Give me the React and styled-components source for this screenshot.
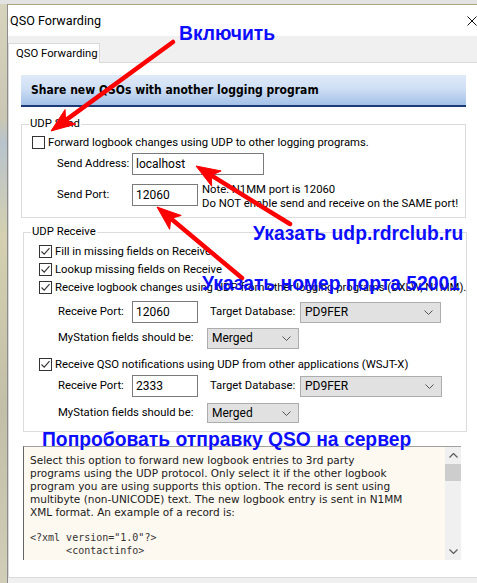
import React from 'react'
import styled, { createGlobalStyle } from 'styled-components'

const GlobalStyle = createGlobalStyle`
  html, body {
    margin: 0;
    padding: 0;
  }
  body {
    width: 477px;
    height: 583px;
    overflow: hidden;
    background: #e2e2e2;
    font-family: Roboto, "Liberation Sans", Arial, sans-serif;
    color: #000;
  }
`

const Page = styled.div`
  position: relative;
  display: flex;
  height: 583px;
  padding-top: 4px;
  box-sizing: border-box;
`

const Desktop = styled.div`
  width: 7px;
  flex: none;
  background: linear-gradient(180deg, #d6d3bd 0%, #c9c7b4 20%, #b8c3cc 24%, #d4d0b0 40%, #c2bfa8 70%, #d0cdb8 100%);
`

const Window = styled.div`
  flex: 1;
  display: flex;
  flex-direction: column;
  border-left: 1px solid #8c8c8c;
  border-top: 1px solid #a9a67e;
  background: #f0f0f0;
`

const TitleBar = styled.div`
  height: 31px;
  flex: none;
  display: flex;
  align-items: center;
  justify-content: space-between;
  padding: 0 4px 0 2px;
  background: #fff;
  font-size: 12.6px;
`

const CloseIcon = () => (
  <svg width="10" height="10" viewBox="0 0 10 10">
    <path d="M0.5 0.5 L9.5 9.5 M9.5 0.5 L0.5 9.5" stroke="#111" strokeWidth="1" />
  </svg>
)

const Body = styled.div`
  flex: 1;
  display: flex;
  flex-direction: column;
  padding: 7px 3px 5px 0;
  min-height: 0;
`

const Tab = styled.div`
  align-self: flex-start;
  position: relative;
  z-index: 1;
  width: 92px;
  height: 20px;
  box-sizing: border-box;
  margin-bottom: -1px;
  padding-left: 7px;
  border: 1px solid #d9d9d9;
  border-bottom: none;
  background: #fff;
  font-size: 11.3px;
  line-height: 19px;
`

const Panel = styled.div`
  flex: 1;
  display: flex;
  flex-direction: column;
  padding: 12px 11px 0 12px;
  border: 1px solid #d9d9d9;
  background: #fff;
`

const Header = styled.div`
  height: 32px;
  box-sizing: border-box;
  display: flex;
  align-items: center;
  padding-left: 10px;
  border-bottom: 2px solid #1d3a76;
  background: linear-gradient(180deg, #dfeaf8 0%, #cfdff4 45%, #a3c1e8 100%);
  font-family: "DejaVu Sans Condensed", "DejaVu Sans", sans-serif;
  font-weight: bold;
  font-size: 12px;
`

const Group = styled.fieldset`
  margin: 0;
  padding: 0;
  min-width: 0;
  border: 1px solid #dcdcdc;
  font-size: 11.3px;
`

const SendGroup = styled(Group)`
  margin-top: 10px;
`

const ReceiveGroup = styled(Group)`
  margin: 7px -1px 0 2px;
`

const Legend = styled.legend`
  margin-left: 7px;
  padding: 0 1px;
  line-height: 14px;
`

const GroupBody = styled.div`
  display: flex;
  flex-direction: column;
  padding: ${p => p.$pad};
`

const CheckRow = styled.div`
  display: flex;
  align-items: center;
  gap: 3px;
  height: ${p => p.$h || 18}px;
  margin-top: ${p => p.$mt || 0}px;
  white-space: nowrap;
`

const Box = styled.span`
  width: 13px;
  height: 13px;
  box-sizing: border-box;
  flex: none;
  display: flex;
  align-items: center;
  justify-content: center;
  border: 1px solid #333;
  background: #fff;
`

const Checkbox = ({ checked }) => (
  <Box>
    {checked && (
      <svg width="11" height="11" viewBox="0 0 11 11">
        <path d="M1.5 5.5 L4.2 8.2 L9.5 2.2" fill="none" stroke="#333" strokeWidth="1.1" />
      </svg>
    )}
  </Box>
)

const FieldRow = styled.div`
  display: flex;
  align-items: ${p => p.$align || 'center'};
  margin-top: ${p => p.$mt || 0}px;
  padding-left: ${p => p.$indent}px;
`

const Label = styled.span`
  flex: none;
  width: ${p => p.$w}px;
  margin-left: ${p => p.$ml || 0}px;
  line-height: 22px;
  white-space: nowrap;
`

const TextBox = styled.div`
  flex: none;
  width: ${p => p.$w}px;
  height: 22px;
  box-sizing: border-box;
  display: flex;
  align-items: center;
  padding-left: 3px;
  border: 1px solid #7a7a7a;
  background: #fff;
  font-size: 12px;
`

const Note = styled.div`
  margin: -1px 0 0 4px;
  line-height: 14px;
  white-space: nowrap;
`

const SelectBox = styled.div`
  flex: none;
  width: ${p => p.$w}px;
  height: ${p => p.$h || 21}px;
  box-sizing: border-box;
  display: flex;
  align-items: center;
  justify-content: space-between;
  padding: 0 7px 0 4px;
  border: 1px solid #adadad;
  background: #e1e1e1;
  font-size: 12px;
`

const Chevron = () => (
  <svg width="9" height="5" viewBox="0 0 9 5">
    <path d="M0.5 0.5 L4.5 4.5 L8.5 0.5" fill="none" stroke="#555" strokeWidth="1" />
  </svg>
)

const Select = ({ value, w, h }) => (
  <SelectBox $w={w} $h={h}>
    <span>{value}</span>
    <Chevron />
  </SelectBox>
)

const Description = styled.div`
  display: flex;
  width: 438px;
  height: 114px;
  box-sizing: border-box;
  margin: 14px 0 0 2px;
  border-top: 1px solid #a0a0a0;
  border-left: 1px solid #646464;
  background: #fdf8f0;
`

const DescText = styled.div`
  flex: 1;
  overflow: hidden;
  padding: 7px 0 0 6px;
  font-family: "DejaVu Sans", Verdana, sans-serif;
  font-size: 10.5px;
  line-height: 13px;
  color: #1a1a1a;
`

const Line = styled.div`
  white-space: pre;
  height: 13px;
`

const Code = styled.div`
  white-space: pre;
  font-family: "DejaVu Sans Mono", "Liberation Mono", monospace;
  font-size: 10px;
  line-height: 12.5px;
  color: #333;
`

const ScrollBar = styled.div`
  width: 16px;
  flex: none;
  display: flex;
  flex-direction: column;
  align-items: center;
  background: #f0f0f0;
`

const ScrollBtn = styled.div`
  height: 17px;
  display: flex;
  align-items: center;
  justify-content: center;
`

const Thumb = styled.div`
  width: 16px;
  height: 17px;
  background: #cdcdcd;
`

const Track = styled.div`
  flex: 1;
`

const Arrowhead = ({ up }) => (
  <svg width="9" height="5" viewBox="0 0 9 5">
    <path d={up ? 'M0.5 4.5 L4.5 0.5 L8.5 4.5' : 'M0.5 0.5 L4.5 4.5 L8.5 0.5'} fill="none" stroke="#606060" strokeWidth="1.3" />
  </svg>
)

const Annotation = styled.div`
  position: absolute;
  left: ${p => p.$x}px;
  top: ${p => p.$y}px;
  font-family: "Liberation Sans", Arial, sans-serif;
  font-weight: bold;
  font-size: 19.3px;
  line-height: 20px;
  color: #0d0dff;
  white-space: nowrap;
`

const Overlay = styled.svg`
  position: absolute;
  left: 0;
  top: 0;
  pointer-events: none;
`

const Arrow = ({ from, to }) => {
  const [x1, y1] = from
  const [x2, y2] = to
  const dx = x2 - x1
  const dy = y2 - y1
  const len = Math.hypot(dx, dy)
  const ux = dx / len
  const uy = dy / len
  const head = 24
  const half = 9
  const bx = x2 - ux * head
  const by = y2 - uy * head
  const nx = x2 - ux * (head - 6)
  const ny = y2 - uy * (head - 6)
  const px = -uy * half
  const py = ux * half
  return (
    <g fill="#ff0000" stroke="#ff0000">
      <line x1={x1} y1={y1} x2={nx} y2={ny} strokeWidth="4.5" strokeLinecap="round" />
      <polygon points={`${x2},${y2} ${bx + px},${by + py} ${nx},${ny} ${bx - px},${by - py}`} strokeWidth="1" />
    </g>
  )
}

const description = [
  'Select this option to forward new logbook entries to 3rd party',
  'programs using the UDP protocol. Only select it if the other logbook',
  'program you are using supports this option. The record is sent using',
  'multibyte (non-UNICODE) text. The new logbook entry is sent in N1MM',
  'XML format. An example of a record is:',
  '',
]

const ReceiveFields = ({ port, first }) => (
  <>
    <FieldRow $indent={19} $mt={first ? 5 : 2}>
      <Label $w={74}>Receive Port:</Label>
      <TextBox $w={66}>{port}</TextBox>
      <Label $w={90} $ml={12}>Target Database:</Label>
      <Select value="PD9FER" w={first ? 141 : 142} />
    </FieldRow>
    <FieldRow $indent={19} $mt={first ? 4 : 5}>
      <Label $w={149}>MyStation fields should be:</Label>
      <Select value="Merged" w={92} h={first ? 21 : 20} />
    </FieldRow>
  </>
)

export default function App() {
  return (
    <Page>
      <GlobalStyle />
      <Desktop />
      <Window>
        <TitleBar>
          <span>QSO Forwarding</span>
          <CloseIcon />
        </TitleBar>
        <Body>
          <Tab>QSO Forwarding</Tab>
          <Panel>
            <Header>Share new QSOs with another logging program</Header>

            <SendGroup>
              <Legend>UDP Send</Legend>
              <GroupBody $pad="4px 0 6px 10px">
                <CheckRow $h={15}>
                  <Checkbox />
                  <span>Forward logbook changes using UDP to other logging programs.</span>
                </CheckRow>
                <FieldRow $indent={25} $mt={3}>
                  <Label $w={75}>Send Address:</Label>
                  <TextBox $w={132}>localhost</TextBox>
                </FieldRow>
                <FieldRow $indent={25} $mt={9} $align="flex-start">
                  <Label $w={75}>Send Port:</Label>
                  <TextBox $w={66}>12060</TextBox>
                  <Note>
                    Note: N1MM port is 12060
                    <br />
                    Do NOT enable send and receive on the SAME port!
                  </Note>
                </FieldRow>
              </GroupBody>
            </SendGroup>

            <ReceiveGroup>
              <Legend>UDP Receive</Legend>
              <GroupBody $pad="3px 0 7px 15px">
                <CheckRow>
                  <Checkbox checked />
                  <span>Fill in missing fields on Receive</span>
                </CheckRow>
                <CheckRow>
                  <Checkbox checked />
                  <span>Lookup missing fields on Receive</span>
                </CheckRow>
                <CheckRow>
                  <Checkbox checked />
                  <span>Receive logbook changes using UDP from other logging programs (DXLW, N1MM).</span>
                </CheckRow>
                <ReceiveFields port="12060" first />
                <CheckRow $mt={6}>
                  <Checkbox checked />
                  <span>Receive QSO notifications using UDP from other applications (WSJT-X)</span>
                </CheckRow>
                <ReceiveFields port="2333" />
              </GroupBody>
            </ReceiveGroup>

            <Description>
              <DescText>
                {description.map((t, i) => (
                  <Line key={i}>{t}</Line>
                ))}
                <Code>{'<?xml version="1.0"?>\n      <contactinfo>'}</Code>
              </DescText>
              <ScrollBar>
                <ScrollBtn>
                  <Arrowhead up />
                </ScrollBtn>
                <Thumb />
                <Track />
                <ScrollBtn>
                  <Arrowhead />
                </ScrollBtn>
              </ScrollBar>
            </Description>
          </Panel>
        </Body>
      </Window>

      <Overlay width="477" height="583" viewBox="0 0 477 583">
        <Arrow from={[173, 42]} to={[51, 131]} />
        <Arrow from={[290, 224]} to={[196, 166]} />
        <Arrow from={[242, 278]} to={[157, 207]} />
      </Overlay>
      <Annotation $x={179} $y={24}>Включить</Annotation>
      <Annotation $x={253} $y={224}>Указать udp.rdrclub.ru</Annotation>
      <Annotation $x={202} $y={274}>Указать номер порта 52001</Annotation>
      <Annotation $x={42} $y={430}>Попробовать отправку QSO на сервер</Annotation>
    </Page>
  )
}
